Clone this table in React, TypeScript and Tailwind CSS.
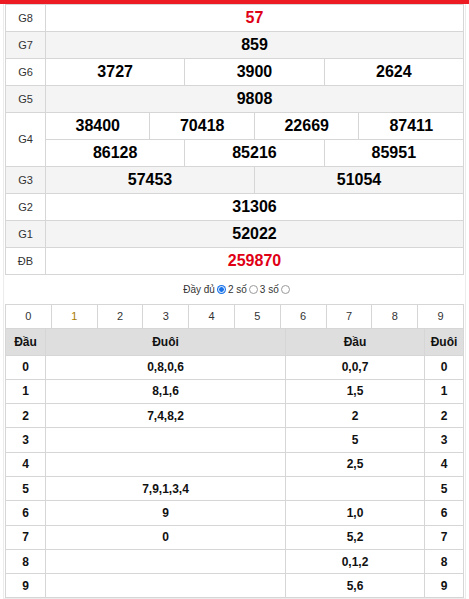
import React from 'react';

type Prize = {
  label: string;
  rows: string[][];
  red?: boolean;
};

const prizes: Prize[] = [
  { label: 'G8', rows: [['57']], red: true },
  { label: 'G7', rows: [['859']] },
  { label: 'G6', rows: [['3727', '3900', '2624']] },
  { label: 'G5', rows: [['9808']] },
  { label: 'G4', rows: [['38400', '70418', '22669', '87411'], ['86128', '85216', '85951']] },
  { label: 'G3', rows: [['57453', '51054']] },
  { label: 'G2', rows: [['31306']] },
  { label: 'G1', rows: [['52022']] },
  { label: 'ĐB', rows: [['259870']], red: true },
];

// đầu / đuôi lists
const loto = [
  { n: 0, dau: '0,8,0,6', duoi: '0,0,7' },
  { n: 1, dau: '8,1,6', duoi: '1,5' },
  { n: 2, dau: '7,4,8,2', duoi: '2' },
  { n: 3, dau: '', duoi: '5' },
  { n: 4, dau: '', duoi: '2,5' },
  { n: 5, dau: '7,9,1,3,4', duoi: '' },
  { n: 6, dau: '9', duoi: '1,0' },
  { n: 7, dau: '0', duoi: '5,2' },
  { n: 8, dau: '', duoi: '0,1,2' },
  { n: 9, dau: '', duoi: '5,6' },
];

const cell = 'border border-[#d6d6d6] text-center p-0';

function Radio({ checked }: { checked?: boolean }) {
  return checked ? (
    <span className="inline-flex w-[9px] h-[9px] rounded-full bg-[#1a73e8] items-center justify-center mx-[2px] align-[-1px]">
      <span className="w-[5px] h-[5px] rounded-full bg-[#1a73e8] border border-white box-content" />
    </span>
  ) : (
    <span className="inline-block w-[9px] h-[9px] rounded-full border border-[#9a9a9a] bg-white mx-[2px] align-[-1px]" />
  );
}

export default function App() {
  return (
    <div className="w-[469px] min-h-[599px] bg-white font-['Liberation_Sans',Arial,sans-serif] text-[#222]">
      <div className="h-[4px] bg-[#ed1c24]" />
      <div className="mx-[3px] border-x border-b border-[#ececec] pl-px pr-px">
        <table className="w-full table-fixed border-collapse">
          <colgroup>
            <col className="w-[40px]" />
            {Array.from({ length: 12 }).map((_, i) => (
              <col key={i} />
            ))}
          </colgroup>
          <tbody>
            {prizes.map((p, idx) =>
              p.rows.map((row, r) => (
                <tr key={p.label + r} className={idx % 2 === 1 ? 'bg-[#f4f4f4]' : 'bg-white'}>
                  {r === 0 && (
                    <td rowSpan={p.rows.length} className={`${cell} text-[11px] text-[#333]`}>
                      {p.label}
                    </td>
                  )}
                  {row.map((num) => (
                    <td
                      key={num}
                      colSpan={12 / row.length}
                      className={`${cell} h-[27px] text-[16px] font-bold ${p.red ? 'text-[#e00015]' : 'text-black'}`}
                    >
                      {num}
                    </td>
                  ))}
                </tr>
              ))
            )}
          </tbody>
        </table>

        <div className="h-[29px] flex items-center justify-center text-[10px] text-[#333] pl-[6px]">
          <span>Đầy đủ</span>
          <Radio checked />
          <span>2 số</span>
          <Radio />
          <span>3 số</span>
          <Radio />
        </div>

        <table className="w-full table-fixed border-collapse">
          <tbody>
            <tr>
              {Array.from({ length: 10 }).map((_, i) => (
                <td
                  key={i}
                  className={`${cell} h-[24px] text-[11px] ${i === 1 ? 'text-[#a87c00]' : 'text-[#333]'}`}
                >
                  {i}
                </td>
              ))}
            </tr>
          </tbody>
        </table>

        <table className="w-full table-fixed border-collapse text-[12px] font-bold text-[#111]">
          <colgroup>
            <col className="w-[40px]" />
            <col className="w-[240px]" />
            <col />
            <col className="w-[39px]" />
          </colgroup>
          <thead>
            <tr className="bg-[#dedede]">
              <th className={`${cell} h-[26px] border-t-0`}>Đầu</th>
              <th className={`${cell} border-t-0`}>Đuôi</th>
              <th className={`${cell} border-t-0`}>Đầu</th>
              <th className={`${cell} border-t-0`}>Đuôi</th>
            </tr>
          </thead>
          <tbody>
            {loto.map((l) => (
              <tr key={l.n}>
                <td className={`${cell} h-[24.3px]`}>{l.n}</td>
                <td className={cell}>{l.dau}</td>
                <td className={cell}>{l.duoi}</td>
                <td className={cell}>{l.n}</td>
              </tr>
            ))}
          </tbody>
        </table>
      </div>
    </div>
  );
}
